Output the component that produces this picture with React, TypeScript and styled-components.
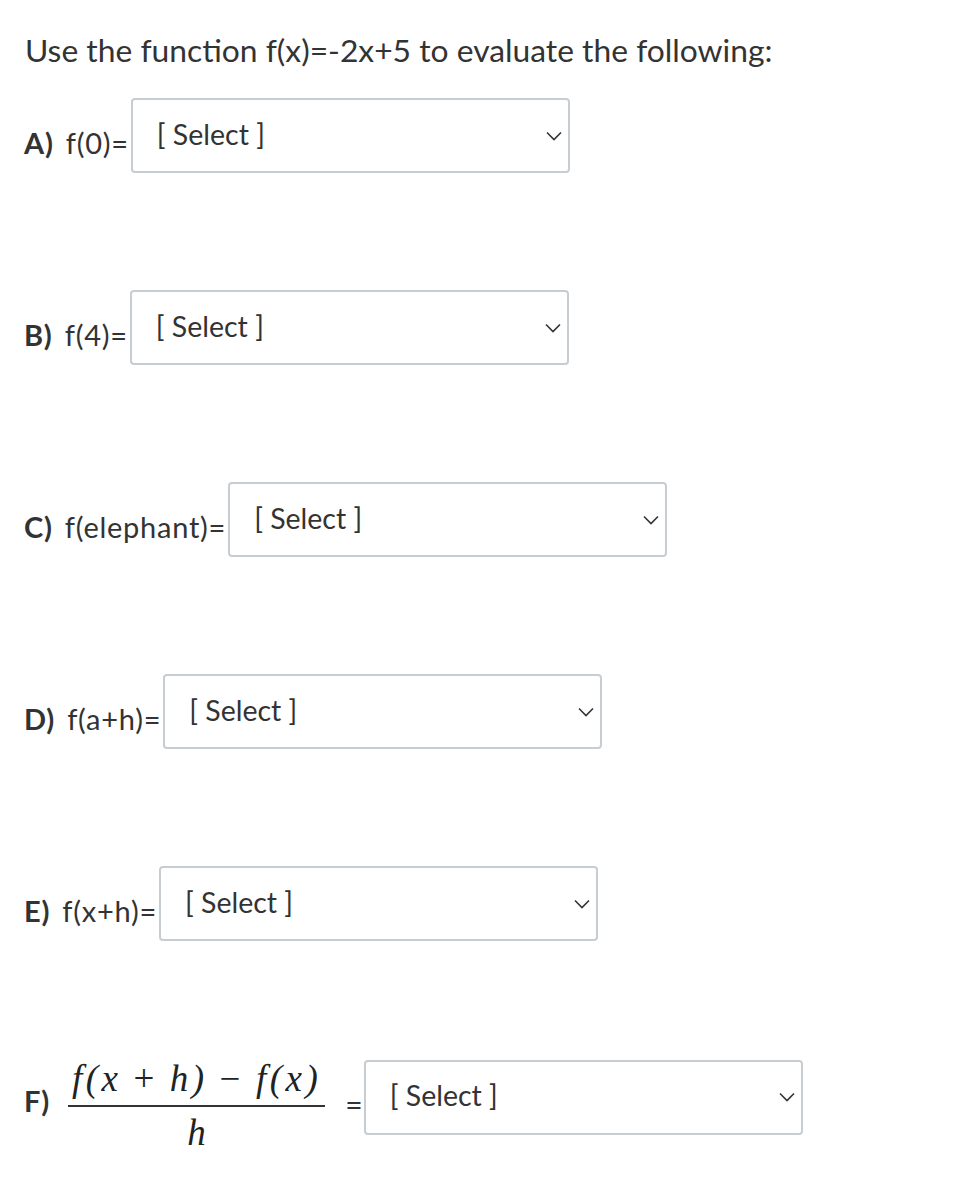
import styled, { createGlobalStyle } from "styled-components";

const GlobalStyle = createGlobalStyle`
  body {
    margin: 0;
    background: #fff;
    font-family: Lato, "Open Sans", sans-serif;
    color: #333;
  }
`;

type Item = { letter: string; expr: string };

const items: Item[] = [
  { letter: "A)", expr: "f(0)=" },
  { letter: "B)", expr: "f(4)=" },
  { letter: "C)", expr: "f(elephant)=" },
  { letter: "D)", expr: "f(a+h)=" },
  { letter: "E)", expr: "f(x+h)=" },
];

function Chevron() {
  return (
    <svg width="16" height="10" viewBox="0 0 16 10" fill="none">
      <path d="M1 1.5 L8 8.5 L15 1.5" stroke="#333" strokeWidth="1.6" />
    </svg>
  );
}

function SelectBox() {
  return (
    <Select>
      <span>[ Select ]</span>
      <Chevron />
    </Select>
  );
}

export default function App() {
  return (
    <Page>
      <GlobalStyle />
      <Heading>Use the function f(x)=-2x+5 to evaluate the following:</Heading>
      {items.map(it => (
        <Row key={it.letter}>
          <Label>
            <b>{it.letter}</b> {it.expr}
          </Label>
          <SelectBox />
        </Row>
      ))}
      <FracRow>
        <Label offset={6}>
          <b>F)</b>
        </Label>
        <Fraction>
          <Num>
            f(x<Op>+</Op>h)<Op>−</Op>f(x)
          </Num>
          <Den>h</Den>
        </Fraction>
        <Equals>=</Equals>
        <SelectBox />
      </FracRow>
    </Page>
  );
}

const Page = styled.div`
  padding: 32px 24px 40px 24px;
`;

const Heading = styled.h1`
  margin: 0 0 30px 1px;
  font-size: 31.8px;
  font-weight: 400;
  line-height: 36px;
`;

const Row = styled.div`
  display: flex;
  align-items: center;
  margin-bottom: 117px;
`;

const FracRow = styled.div`
  display: flex;
  align-items: center;
  margin-top: -17px;
`;

const Label = styled.div<{ offset?: number }>`
  font-size: 29px;
  letter-spacing: 0.75px;
  padding-top: ${p => p.offset ?? 14}px;
  margin-right: 2px;
  white-space: nowrap;

  b {
    font-weight: 700;
    margin-right: 4px;
  }
`;

const Select = styled.div`
  box-sizing: border-box;
  width: 439px;
  height: 75px;
  border: 2px solid #c8cdd1;
  border-radius: 4px;
  display: flex;
  align-items: center;
  justify-content: space-between;
  padding: 0 6px 0 24px;
  font-size: 28.5px;
  color: #333;
  flex-shrink: 0;

  span {
    margin-top: -4px;
  }
`;

const Fraction = styled.div`
  display: inline-flex;
  flex-direction: column;
  align-items: center;
  padding-top: 18px;
  margin-left: 12px;
  margin-right: 20px;
  font-family: "Liberation Serif", "DejaVu Serif", serif;
  font-style: italic;
  font-size: 37px;
  line-height: 40px;
  color: #222;
`;

const Num = styled.div`
  padding: 0 4px 6px;
  border-bottom: 2px solid #333;
  white-space: nowrap;
  letter-spacing: 3.5px;
`;

const Op = styled.span`
  font-style: normal;
  margin: 0 12px;
`;

const Den = styled.div`
  padding-top: 6px;
`;

const Equals = styled.div`
  font-size: 30px;
  padding-top: 14px;
  margin-right: 1px;
`;
